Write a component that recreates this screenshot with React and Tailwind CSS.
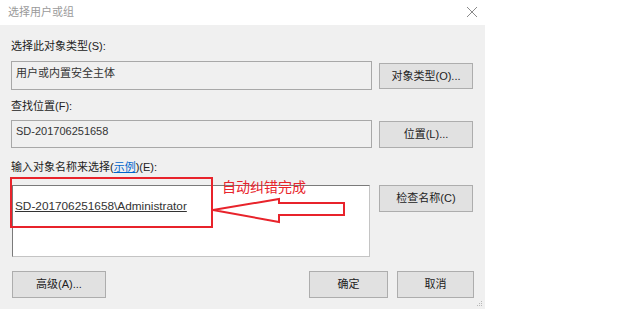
const font = "font-['Liberation_Sans','Noto_Sans_CJK_SC',sans-serif]";

function Btn({ children, className = "" }) {
  return (
    <button
      className={`flex items-center justify-center border border-[#adadad] bg-[#e1e1e1] text-[11px] leading-none text-[#222] ${className}`}
    >
      {children}
    </button>
  );
}

export default function App() {
  return (
    <div className={`flex h-[309px] w-[620px] bg-white ${font}`}>
      {/* dialog */}
      <div className="flex w-[485px] flex-col">
        {/* title bar */}
        <div className="flex h-[25px] items-center justify-between bg-white pl-[8px] pr-[7px]">
          <span className="text-[11px] leading-none text-[#9a9a9a]">选择用户或组</span>
          <svg width="12" height="12" viewBox="0 0 12 12" className="mt-[-1px]">
            <path d="M1 1 L11 11 M11 1 L1 11" stroke="#8a8a8a" strokeWidth="1" fill="none" />
          </svg>
        </div>

        {/* body */}
        <div className="relative flex flex-1 flex-col bg-[#f0f0f0] pl-[11px] pt-[14px] text-[#222]">
          <div className="h-[15px] text-[11px] leading-[15px]">选择此对象类型(S):</div>
          <div className="mt-[7px] flex items-start gap-[7px]">
            <div className="h-[29px] w-[361px] border border-[#a8a8a8] pl-[4px] pt-[4px] text-[11px] leading-[15px] text-[#333]">
              用户或内置安全主体
            </div>
            <Btn className="mt-[2px] h-[26px] w-[94px]">对象类型(O)...</Btn>
          </div>

          <div className="mt-[9px] h-[15px] text-[11px] leading-[15px]">查找位置(F):</div>
          <div className="mt-[6px] flex items-start gap-[7px]">
            <div className="h-[28px] w-[361px] border border-[#a8a8a8] pl-[4px] pt-[3px] text-[11px] leading-[15px] text-[#333]">
              SD-201706251658
            </div>
            <Btn className="mt-[1px] h-[27px] w-[94px]">位置(L)...</Btn>
          </div>

          <div className="mt-[12px] h-[15px] text-[11px] leading-[15px]">
            输入对象名称来选择(<span className="text-[#0066cc] underline">示例</span>)(E):
          </div>
          <div className="mt-[10px] flex items-start gap-[9px]">
            <div className="relative ml-[1px] h-[72px] w-[358px] border border-[#c4c4c4] border-l-[#7a7a7a] border-t-[#7a7a7a] bg-white pl-[2px] pt-[7px]">
              <span className="text-[11.8px] leading-[15px] text-[#333] underline">
                SD-201706251658\Administrator
              </span>
              {/* annotation overlay */}
              <div className="absolute left-[-3px] top-[-9px] h-[51px] w-[203px] border-2 border-[#e8232b]" />
              <div className="absolute left-[209px] top-[-9px] text-[14px] leading-[20px] text-[#e8232b]">
                自动纠错完成
              </div>
              <svg
                className="absolute left-[198px] top-[11px]"
                width="136"
                height="28"
                viewBox="0 0 136 28"
              >
                <path
                  d="M2 13 L68 2 L68 6 L133 6 L133 18 L68 18 L68 25 Z"
                  fill="white"
                  stroke="#e8232b"
                  strokeWidth="2"
                  strokeLinejoin="miter"
                />
              </svg>
            </div>
            <Btn className="h-[27px] w-[94px]">检查名称(C)</Btn>
          </div>

          <div className="mt-[14px] flex w-[463px] items-start justify-between pl-[1px]">
            <Btn className="h-[27px] w-[94px]">高级(A)...</Btn>
            <div className="flex gap-[9px]">
              <Btn className="h-[27px] w-[79px]">确定</Btn>
              <Btn className="h-[27px] w-[77px]">取消</Btn>
            </div>
          </div>

          {/* size grip */}
          <svg className="absolute bottom-[2px] right-[2px]" width="8" height="8" viewBox="0 0 8 8">
            <rect x="6" y="2" width="1" height="1" fill="#b8b8b8" />
            <rect x="4" y="4" width="1" height="1" fill="#b8b8b8" />
            <rect x="6" y="4" width="1" height="1" fill="#b8b8b8" />
            <rect x="2" y="6" width="1" height="1" fill="#b8b8b8" />
            <rect x="4" y="6" width="1" height="1" fill="#b8b8b8" />
            <rect x="6" y="6" width="1" height="1" fill="#b8b8b8" />
          </svg>
        </div>
      </div>
    </div>
  );
}
